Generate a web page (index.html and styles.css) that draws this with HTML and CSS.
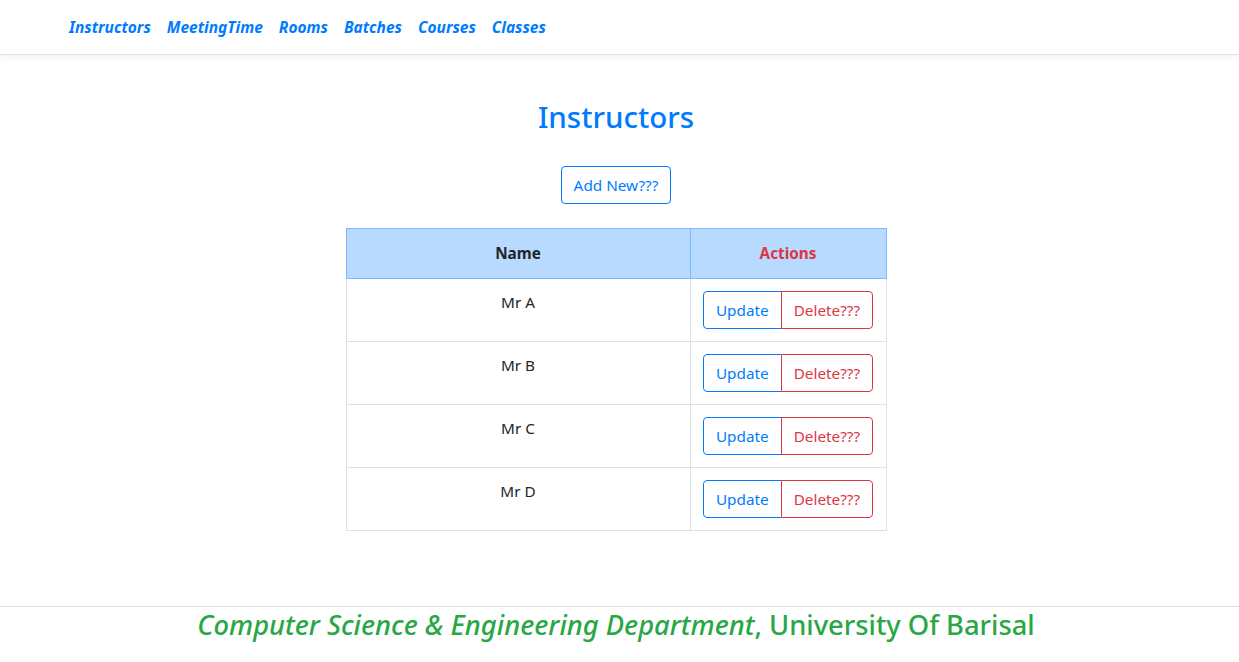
FILE: index.html
```html
<!DOCTYPE html>
<html lang="en">
<head>
<meta charset="utf-8">
<title>Instructors</title>
<link rel="stylesheet" href="styles.css">
</head>
<body>
<nav class="navbar">
  <ul class="nav-list">
    <li><a class="nav-link" href="#">Instructors</a></li>
    <li><a class="nav-link" href="#">MeetingTime</a></li>
    <li><a class="nav-link" href="#">Rooms</a></li>
    <li><a class="nav-link" href="#">Batches</a></li>
    <li><a class="nav-link" href="#">Courses</a></li>
    <li><a class="nav-link" href="#">Classes</a></li>
  </ul>
</nav>
<main class="main">
  <h2 class="title">Instructors</h2>
  <a class="btn btn-primary-outline" href="#">Add New???</a>
  <table class="table">
    <colgroup><col class="c-name"><col class="c-actions"></colgroup>
    <thead>
      <tr><th class="col-name">Name</th><th class="col-actions">Actions</th></tr>
    </thead>
    <tbody>
      <tr><td>Mr A</td><td class="actions"><div class="btn-group"><a class="btn btn-primary-outline" href="#">Update</a><a class="btn btn-danger-outline" href="#">Delete???</a></div></td></tr>
      <tr><td>Mr B</td><td class="actions"><div class="btn-group"><a class="btn btn-primary-outline" href="#">Update</a><a class="btn btn-danger-outline" href="#">Delete???</a></div></td></tr>
      <tr><td>Mr C</td><td class="actions"><div class="btn-group"><a class="btn btn-primary-outline" href="#">Update</a><a class="btn btn-danger-outline" href="#">Delete???</a></div></td></tr>
      <tr><td>Mr D</td><td class="actions"><div class="btn-group"><a class="btn btn-primary-outline" href="#">Update</a><a class="btn btn-danger-outline" href="#">Delete???</a></div></td></tr>
    </tbody>
  </table>
</main>
<footer class="footer">
  <p class="footer-text"><em>Computer Science &amp; Engineering Department</em>, University Of Barisal</p>
</footer>
</body>
</html>
```
FILE: styles.css
```css
* { box-sizing: border-box; }
html, body { margin: 0; padding: 0; }
body {
  font-family: "Noto Sans", "Open Sans", sans-serif;
  font-size: 15.3px;
  line-height: 1.5;
  color: #212529;
  background: #fff;
}
.navbar {
  height: 55px;
  display: flex;
  align-items: center;
  padding-left: 61px;
  padding-top: 2px;
  border-bottom: 1px solid #e3e3e3;
  box-shadow: 0 2px 6px rgba(0,0,0,0.06);
}
.nav-list {
  list-style: none;
  margin: 0;
  padding: 0;
  display: flex;
}
.nav-link {
  display: block;
  padding: 0 8px;
  color: #007bff;
  font-size: 15.5px;
  font-weight: 700;
  font-style: italic;
  text-decoration: none;
}
.main {
  display: flex;
  flex-direction: column;
  align-items: center;
  padding-top: 43px;
  padding-right: 7px;
}
.title {
  margin: 0 0 30px;
  height: 38px;
  font-size: 29.5px;
  font-weight: 500;
  line-height: 38px;
  color: #007bff;
}
.btn {
  display: inline-block;
  height: 38px;
  padding: 6px 12px;
  font-size: 15.3px;
  line-height: 24px;
  border: 1px solid transparent;
  border-radius: 4px;
  text-decoration: none;
  background: #fff;
}
.btn-primary-outline { color: #007bff; border-color: #007bff; }
.btn-danger-outline { color: #dc3545; border-color: #dc3545; }
.table {
  margin-top: 24px;
  width: 540px;
  border-collapse: collapse;
  table-layout: fixed;
}
.c-name { width: 344px; }
.c-actions { width: 196px; }
.table th, .table td {
  border: 1px solid #dee2e6;
  text-align: center;
  vertical-align: top;
}
.table thead th {
  background: #b8daff;
  border-color: #7abaff;
  height: 50px;
  padding: 12px;
  font-weight: 700;
  vertical-align: middle;
}
.col-name { color: #212529; }
.col-actions { color: #dc3545; }
.table td { height: 63px; padding: 12px; }
.btn-group { display: inline-flex; }
.btn-group .btn:first-child { border-top-right-radius: 0; border-bottom-right-radius: 0; }
.btn-group .btn:last-child { border-top-left-radius: 0; border-bottom-left-radius: 0; margin-left: -1px; }
.footer {
  margin-top: 75px;
  border-top: 1px solid #dee2e6;
  padding-right: 7px;
}
.footer-text {
  margin: 0;
  text-align: center;
  color: #28a745;
  font-size: 27.3px;
  line-height: 36px;
  font-weight: 500;
}
```
